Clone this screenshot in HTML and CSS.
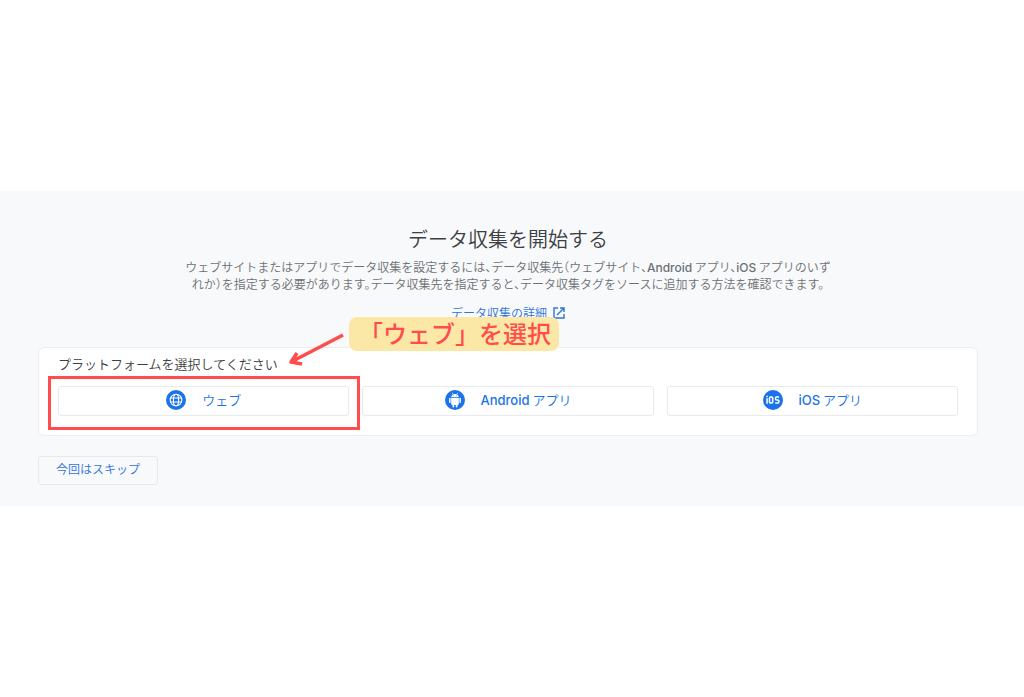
FILE: index.html
```html
<!DOCTYPE html>
<html lang="ja">
<head>
<meta charset="utf-8">
<meta name="viewport" content="width=device-width, initial-scale=1">
<title>データ収集を開始する</title>
<link rel="stylesheet" href="styles.css">
</head>
<body class="page">
<main class="band">
  <header class="intro">
    <h1 class="title">データ収集を開始する</h1>
    <p class="description">ウェブサイトまたはアプリでデータ収集を設定するには、データ収集先（ウェブサイト、<span class="latin">Android</span> アプリ、<span class="latin">iOS</span> アプリのいず<br>れか）を指定する必要があります。データ収集先を指定すると、データ収集タグをソースに追加する方法を確認できます。</p>
    <a class="details" href="#">データ収集の詳細
      <svg class="details-icon" viewBox="0 0 12 12" aria-hidden="true"><path d="M5 1H1v10h10V7M7 1h4v4M11 1 4 8" fill="none" stroke="currentColor" stroke-width="1.4"/></svg>
    </a>
  </header>

  <section class="panel" aria-labelledby="platform-heading">
    <h2 class="panel-title" id="platform-heading">プラットフォームを選択してください</h2>
    <div class="platforms">
      <div class="choice choice-marked">
        <button class="platform" type="button">
          <svg class="platform-icon" viewBox="0 0 20 20" aria-hidden="true">
            <circle cx="10" cy="10" r="10" fill="#1a73e8"/>
            <g fill="none" stroke="#fff" stroke-width="1.1"><circle cx="10" cy="10" r="5.8"/><ellipse cx="10" cy="10" rx="2.6" ry="5.8"/><path d="M4.7 8h10.6M4.7 12h10.6"/></g>
          </svg>
          <span>ウェブ</span>
        </button>
      </div>
      <div class="choice">
        <button class="platform" type="button">
          <svg class="platform-icon" viewBox="0 0 20 20" aria-hidden="true">
            <circle cx="10" cy="10" r="10" fill="#1a73e8"/>
            <g fill="#fff"><path d="M6.2 7.2C6.2 5.2 7.8 3.9 10 3.9s3.8 1.3 3.8 3.3zM6.2 7.9h7.6v6.2a.8.8 0 0 1-.8.8H7a.8.8 0 0 1-.8-.8z"/><rect x="4.1" y="7.8" width="1.5" height="5.2" rx=".75"/><rect x="14.4" y="7.8" width="1.5" height="5.2" rx=".75"/><rect x="7.5" y="13.5" width="1.7" height="4" rx=".8"/><rect x="10.8" y="13.5" width="1.7" height="4" rx=".8"/></g>
            <path d="m7.2 2.8 1.1 1.8M12.8 2.8l-1.1 1.8" stroke="#fff" stroke-width=".7"/>
            <g fill="#1a73e8"><circle cx="8.4" cy="5.7" r=".45"/><circle cx="11.6" cy="5.7" r=".45"/></g>
          </svg>
          <span><span class="latin">Android</span> アプリ</span>
        </button>
      </div>
      <div class="choice">
        <button class="platform" type="button">
          <svg class="platform-icon" viewBox="0 0 20 20" aria-hidden="true">
            <circle cx="10" cy="10" r="10" fill="#1a73e8"/>
            <g fill="none" stroke="#fff" stroke-width="1.5"><path d="M4.1 8.2v5.5M4.1 5.8v1.4"/><rect x="6.5" y="6.9" width="3.2" height="6.1" rx="1"/><path d="M16.1 6.9h-2.6a1 1 0 0 0-1 1v1a1 1 0 0 0 1 1h1.4a1 1 0 0 1 1 1V12a1 1 0 0 1-1 1h-2.7"/></g>
          </svg>
          <span><span class="latin">iOS</span> アプリ</span>
        </button>
      </div>
    </div>
    <svg class="arrow" viewBox="0 0 60 36" aria-hidden="true"><path d="M56 4 4 31M10 22 4 31l11 2" fill="none" stroke="#ff4d4d" stroke-width="3.6" stroke-linejoin="round"/></svg>
    <p class="callout">「ウェブ」を選択</p>
  </section>

  <button class="skip" type="button">今回はスキップ</button>
</main>
</body>
</html>
```
FILE: styles.css
```css
* {
  box-sizing: border-box;
}

.page {
  margin: 0;
  min-height: 100vh;
  display: flex;
  flex-direction: column;
  justify-content: center;
  background: #fff;
  font-family: "Noto Sans CJK JP", sans-serif;
  font-weight: 350;
}

.band {
  padding: 36px 46px 21px 38px;
  background: #f8f9fb;
}

.intro {
  display: flex;
  flex-direction: column;
  align-items: center;
  text-align: center;
}

.title {
  margin: 0;
  font-size: 20px;
  line-height: 24px;
  font-weight: 350;
  color: #3c4043;
}

.description {
  margin: 8px 0 13px;
  font-size: 12px;
  line-height: 16px;
  color: #6c7074;
  font-feature-settings: "halt";
}

.latin {
  font-family: Inter, sans-serif;
  font-weight: 500;
}

.details {
  display: flex;
  align-items: center;
  gap: 6px;
  font-size: 12px;
  line-height: 16px;
  color: #2f73dc;
  text-decoration: none;
}

.details-icon {
  width: 12px;
  height: 12px;
}

.panel {
  position: relative;
  margin: 26px 0 20px;
  padding: 7px 19px 19px;
  border: 1px solid #edeef0;
  border-radius: 6px;
  background: #fff;
}

.panel-title {
  margin: 0 0 13px;
  font-size: 13px;
  line-height: 18px;
  font-weight: 350;
  color: #3c4043;
}

.platforms {
  display: grid;
  grid-template-columns: repeat(3, 1fr);
  gap: 13px;
}

.choice {
  position: relative;
}

.choice-marked::after {
  content: "";
  position: absolute;
  inset: -10px -11px -14px -10px;
  border: 3px solid #ff4d4d;
  pointer-events: none;
}

.platform {
  width: 100%;
  height: 30px;
  padding: 0 8px 2px;
  display: flex;
  align-items: center;
  justify-content: center;
  gap: 16px;
  border: 1px solid #e8eaec;
  border-radius: 3px;
  background: #fff;
  font: inherit;
  font-size: 13px;
  line-height: 18px;
  color: #1a73e8;
}

.platform-icon {
  width: 20px;
  height: 20px;
}

.callout {
  position: absolute;
  left: 310px;
  top: -31px;
  margin: 0;
  padding: 0 8px 2px 10px;
  border-radius: 8px;
  background: #fce8a6;
  font-size: 24px;
  line-height: 32px;
  font-weight: 500;
  color: #ff4d4d;
  white-space: nowrap;
}

.arrow {
  position: absolute;
  left: 248px;
  top: -17px;
  width: 60px;
  height: 36px;
}

.skip {
  display: block;
  height: 29px;
  padding: 0 17px 4px;
  border: 1px solid #e6e8ea;
  border-radius: 3px;
  background: transparent;
  font: inherit;
  font-size: 12px;
  line-height: 16px;
  color: #2f73dc;
}
```
